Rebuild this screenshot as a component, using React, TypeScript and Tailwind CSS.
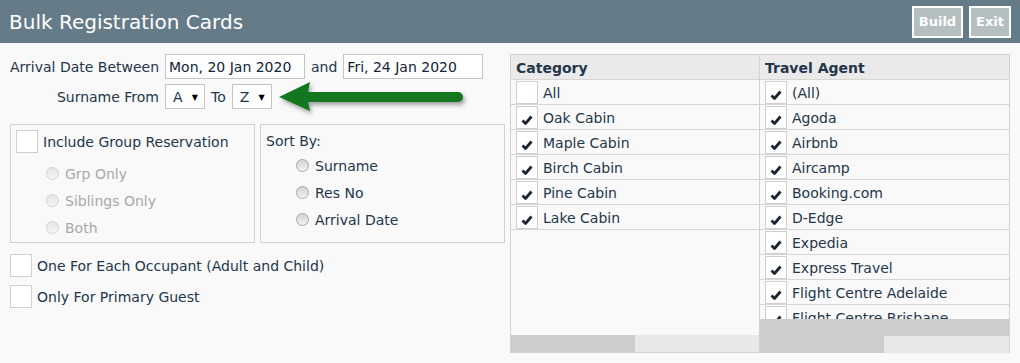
import React from 'react';

const font = { fontFamily: '"DejaVu Sans", Verdana, sans-serif' };

const Check: React.FC = () => (
  <svg width="12" height="10" viewBox="0 0 12 10" className="mt-[6px]">
    <path d="M1.5 5.5 L4.5 8.5 L10.5 1.5" fill="none" stroke="#1b2633" strokeWidth="2.8" strokeLinejoin="round" />
  </svg>
);

const Box: React.FC<{ checked?: boolean; className?: string }> = ({ checked, className = '' }) => (
  <div className={`w-[22px] h-[23px] shrink-0 bg-white border border-[#cfcfcf] flex items-center justify-center ${className}`}>
    {checked && <Check />}
  </div>
);

const Radio: React.FC<{ disabled?: boolean }> = ({ disabled }) => (
  <div
    className={`w-[13px] h-[13px] rounded-full border shrink-0 ${
      disabled
        ? 'border-[#d2d2d2] bg-gradient-to-b from-[#e6e6e6] to-[#f6f6f6]'
        : 'border-[#a6a6a6] bg-gradient-to-b from-[#d4d4d4] to-[#f2f2f2]'
    }`}
  />
);

const Row: React.FC<{ label: string; checked?: boolean }> = ({ label, checked }) => (
  <div className="h-[25px] shrink-0 border-b border-[#d6d6d6] flex items-center pl-[5px] gap-[5px]">
    <Box checked={checked} />
    <span className="whitespace-nowrap pt-[2px]">{label}</span>
  </div>
);

const categories = ['Oak Cabin', 'Maple Cabin', 'Birch Cabin', 'Pine Cabin', 'Lake Cabin'];
const agents = [
  '(All)',
  'Agoda',
  'Airbnb',
  'Aircamp',
  'Booking.com',
  'D-Edge',
  'Expedia',
  'Express Travel',
  'Flight Centre Adelaide',
  'Flight Centre Brisbane',
];

export default function App() {
  return (
    <div className="w-[1020px] h-[363px] bg-[#f9f9f9] text-[14px] text-[#23364a] relative overflow-hidden" style={font}>
      <header className="h-[43px] bg-[#657b88] flex items-center justify-between pl-[9px] pr-[9px]">
        <h1 className="text-[20px] text-white font-normal">Bulk Registration Cards</h1>
        <div className="flex gap-[6px]">
          <button className="w-[51px] h-[32px] border-2 border-white bg-[#b4bfbf] text-white text-[13px] font-bold">Build</button>
          <button className="w-[42px] h-[32px] border-2 border-white bg-[#b4bfbf] text-white text-[13px] font-bold">Exit</button>
        </div>
      </header>

      <div className="flex">
        <div className="w-[510px] pl-[10px] pt-[11px]">
          <div className="flex items-center h-[25px]">
            <span className="w-[155px] text-right pr-[6px] pt-[2px] whitespace-nowrap">Arrival Date Between</span>
            <div className="w-[140px] h-[25px] bg-white border border-[#c4c4c4] pl-[3px] pt-[2px] flex items-center text-[#102338]">Mon, 20 Jan 2020</div>
            <span className="px-[6px] pt-[2px]">and</span>
            <div className="w-[140px] h-[25px] bg-white border border-[#c4c4c4] pl-[3px] pt-[2px] flex items-center text-[#102338]">Fri, 24 Jan 2020</div>
          </div>
          <div className="flex items-center h-[25px] mt-[5px]">
            <span className="w-[155px] text-right pr-[6px] pt-[2px]">Surname From</span>
            <div className="w-[40px] h-[25px] bg-white border border-[#c4c4c4] flex items-center justify-between pl-[7px] pr-[6px] pt-[2px]">
              <span>A</span>
              <span className="text-[8px] text-black">▼</span>
            </div>
            <span className="px-[6px] pt-[2px]">To</span>
            <div className="w-[40px] h-[25px] bg-white border border-[#c4c4c4] flex items-center justify-between pl-[7px] pr-[6px] pt-[2px]">
              <span>Z</span>
              <span className="text-[8px] text-black">▼</span>
            </div>
          </div>

          <div className="flex gap-[5px] mt-[15px]">
            <div className="w-[245px] h-[119px] border border-[#d2d2d2] pt-[5px] pl-[5px]">
              <div className="flex items-center gap-[5px]">
                <Box />
                <span className="pt-[2px]">Include Group Reservation</span>
              </div>
              <div className="mt-[7px] text-[#a8a8a8]">
                {['Grp Only', 'Siblings Only', 'Both'].map((l) => (
                  <div key={l} className="h-[27px] flex items-center gap-[6px] pl-[30px]">
                    <Radio disabled />
                    <span className="pt-[2px]">{l}</span>
                  </div>
                ))}
              </div>
            </div>
            <div className="w-[245px] h-[119px] border border-[#d2d2d2] pt-[6px] pl-[5px]">
              <div className="h-[20px] leading-[20px]">Sort By:</div>
              <div className="mt-[1px]">
                {['Surname', 'Res No', 'Arrival Date'].map((l) => (
                  <div key={l} className="h-[27px] flex items-center gap-[6px] pl-[30px]">
                    <Radio />
                    <span className="pt-[2px]">{l}</span>
                  </div>
                ))}
              </div>
            </div>
          </div>

          <div className="flex items-center gap-[5px] mt-[11px]">
            <Box />
            <span className="pt-[2px]">One For Each Occupant (Adult and Child)</span>
          </div>
          <div className="flex items-center gap-[5px] mt-[8px]">
            <Box />
            <span className="pt-[2px]">Only For Primary Guest</span>
          </div>
        </div>

        <div className="mt-[11px] w-[500px] h-[299px] border border-[#d2d2d2] flex">
          <div className="w-[249px] flex flex-col border-r border-[#d2d2d2]">
            <div className="h-[25px] shrink-0 bg-[#eaeaea] border-b border-[#d6d6d6] font-bold pl-[5px] pt-[2px] flex items-center">Category</div>
            <div className="flex-1 overflow-hidden flex flex-col">
              <Row label="All" />
              {categories.map((c) => (
                <Row key={c} label={c} checked />
              ))}
            </div>
            <div className="h-[17px] shrink-0 bg-[#e8e8e8] flex">
              <div className="w-[124px] bg-[#cdcdcd]" />
            </div>
          </div>
          <div className="flex-1 flex flex-col">
            <div className="h-[25px] shrink-0 bg-[#eaeaea] border-b border-[#d6d6d6] font-bold pl-[5px] pt-[2px] flex items-center">Travel Agent</div>
            <div className="h-[239px] overflow-hidden flex flex-col shrink-0">
              {agents.map((a) => (
                <Row key={a} label={a} checked />
              ))}
            </div>
            <div className="h-[17px] shrink-0 bg-[#cdcdcd]" />
            <div className="h-[17px] shrink-0 bg-[#e8e8e8] flex">
              <div className="w-[124px] bg-[#cdcdcd]" />
            </div>
          </div>
        </div>
      </div>

      <svg
        className="absolute left-[270px] top-[75px] drop-shadow-[2px_3px_2px_rgba(0,0,0,0.35)]"
        width="200"
        height="45"
        viewBox="0 0 200 45"
      >
        <path d="M9 22 L40 7 Q36 22 40 36 Z" fill="#137720" />
        <line x1="38" y1="22" x2="188" y2="22" stroke="#137720" strokeWidth="10" strokeLinecap="round" />
      </svg>
    </div>
  );
}
